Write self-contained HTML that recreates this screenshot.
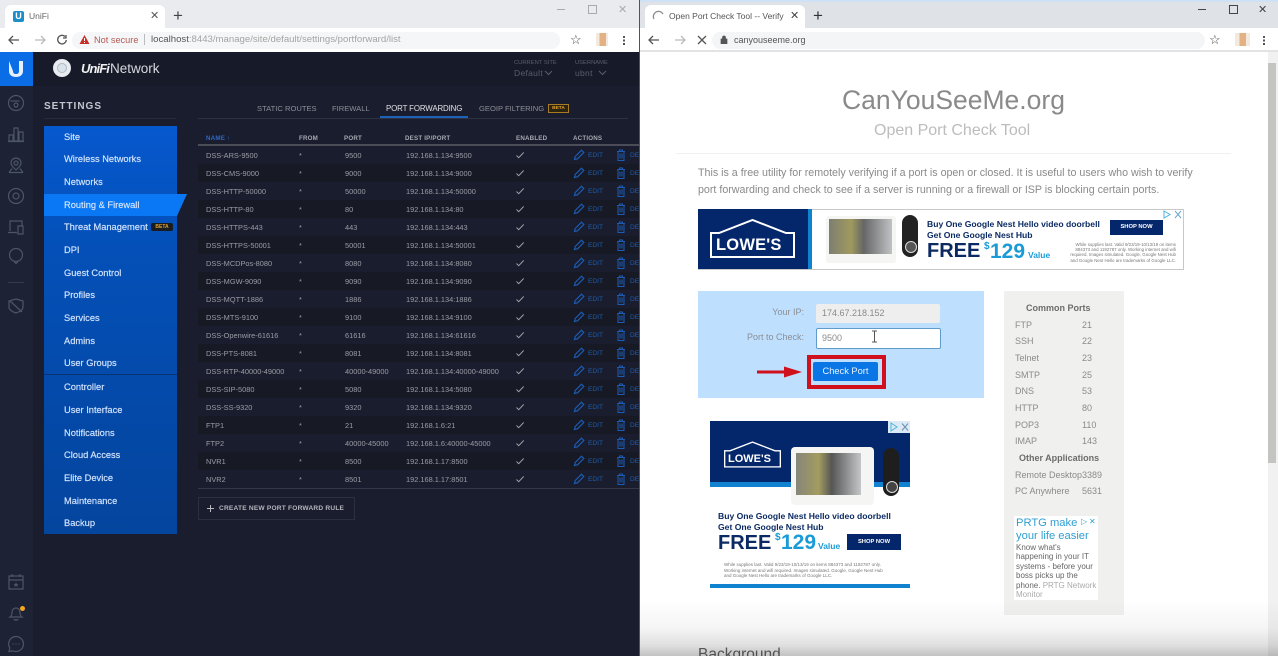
<!DOCTYPE html>
<html><head><meta charset="utf-8"><style>
html,body{margin:0;padding:0;width:1278px;height:656px;overflow:hidden;background:#fff}
body{font-family:"Liberation Sans",sans-serif;position:relative}
#w{position:absolute;left:0;top:0;width:1278px;height:656px;overflow:hidden;filter:blur(.35px)}
#w div,#w span,#w b,#w i,#w svg{position:absolute;white-space:nowrap;display:block}
.m{left:64px;font-size:9.3px;color:#d6e6ff;line-height:12px;margin-top:-.7px;-webkit-text-stroke:.15px #d6e6ff}
.a{left:198px;width:441px;height:18px;background:#171a24}
.t{font-size:7.4px;color:#9a9da6;line-height:10px}
.h{font-size:6.2px;font-weight:bold;color:#a6a9b2;line-height:8px;top:135px;letter-spacing:.2px}
.p{font-size:9px;color:#8b8b8b;line-height:11px}
.nav{left:7px;width:18px;height:18px;fill:none;stroke:#4c5566;stroke-width:1.2}
.e{font-size:6.6px;color:#1d5cb0;line-height:10px}
</style></head><body><div id="w">
<svg style="width:0;height:0"><defs>
<symbol id="pen" viewBox="0 0 12 12"><path d="M1.500 10.500l.7-3L8.500 1.200l2.300 2.300-6.300 6.300z" fill="none" stroke="#1c5cb4" stroke-width="1.200"/></symbol>
<symbol id="tr" viewBox="0 0 10 12"><path d="M1 2.500h8M3.500 2.500V1h3v1.500M2 2.500v9h6v-9M4 4.500v5M6 4.500v5" fill="none" stroke="#1c5cb4" stroke-width="1"/></symbol>
<symbol id="ck" viewBox="0 0 10 10"><path d="M1.500 5.500l2.200 2.200 5-5.200" fill="none" stroke="#a0a2a8" stroke-width="1"/></symbol>
<symbol id="lw" viewBox="0 0 85 39" preserveAspectRatio="none"><path d="M1 38V14H9L42.500 1 76 14H84V38Z" fill="none" stroke="#fff" stroke-width="2"/></symbol>
</defs></svg>

<!-- left browser -->
<div style="left:0;top:0;width:639px;height:28px;background:#e9ebee"></div>
<div style="left:5px;top:5px;width:160px;height:23px;background:#fff;border-radius:6px 6px 0 0"></div>
<div style="left:13px;top:11px;width:11px;height:11px;background:#1c8fc9;border-radius:2px;color:#fff;font-size:9px;line-height:11px;text-align:center;font-weight:bold">U</div>
<div style="left:29px;top:10px;font-size:8.500px;line-height:12px;color:#666">UniFi</div>
<div style="left:150px;top:10px;font-size:11px;line-height:12px;color:#555">✕</div>
<div style="left:173px;top:6px;font-size:17px;line-height:20px;color:#444">+</div>
<div style="left:0;top:28px;width:639px;height:24px;background:#fff"></div>
<div style="left:72px;top:32px;width:488px;height:17px;background:#f5f6f7;border-radius:9px"></div>
<svg style="left:5px;top:33px;width:68px;height:14px" viewBox="0 0 68 14"><path d="M14 7H4M8 3L4 7l4 4" fill="none" stroke="#555" stroke-width="1.300"/><path d="M40 7H30M36 3l4 4-4 4" fill="none" stroke="#bbb" stroke-width="1.300"/><path d="M60 3.500A4.300 4.300 0 1 0 61.300 7M61 2v3h-3" fill="none" stroke="#555" stroke-width="1.300"/></svg>
<svg style="left:79px;top:34px;width:11px;height:11px" viewBox="0 0 11 11"><path d="M5.500 1L10.500 10H.5z" fill="#c9302a"/><path d="M5.500 4v3M5.500 8v1" stroke="#fff"/></svg>
<div style="left:94px;top:34px;font-size:9.200px;line-height:12px;color:#b55a55">Not secure</div>
<div style="left:144px;top:34px;width:1px;height:11px;background:#bbb"></div>
<div style="left:151px;top:34px;font-size:9.600px;line-height:12px;color:#a4a4a4"><span style="position:static;display:inline;color:#555">localhost</span>:8443/manage/site/default/settings/portforward/list</div>
<div style="left:570px;top:32px;font-size:13px;line-height:16px;color:#444">☆</div>
<div style="left:596px;top:33px;width:12px;height:13px;background:linear-gradient(90deg,#f3eadf 30%,#e3b184 30%,#e3b184 85%,#f3eadf 85%)"></div>
<div style="left:623px;top:36px;width:2px;height:2px;background:#555;box-shadow:0 3.500px #555,0 7px #555"></div>
<div style="left:557px;top:9px;width:8px;height:1px;background:#aaa"></div>
<div style="left:588px;top:5px;width:7px;height:7px;border:1px solid #aaa"></div>
<div style="left:618px;top:3px;font-size:11px;line-height:14px;color:#aaa">✕</div>

<!-- unifi app -->
<div style="left:0;top:52px;width:639px;height:604px;background:#1a1d2d"></div>
<div style="left:0;top:52px;width:33px;height:604px;background:#1d2334"></div>
<div style="left:33px;top:52px;width:606px;height:34px;background:#171a29"></div>
<div style="left:0;top:52px;width:33px;height:34px;background:#0a6de6"></div>
<svg style="left:6px;top:58px;width:20px;height:22px" viewBox="0 0 20 22"><path d="M3 3v10c0 4 3 6 7 6s7-2 7-6V3h-4v10c0 2-1 3-3 3s-3-1-3-3" fill="#e6f0ff"/></svg>
<svg class="nav" style="top:94px" viewBox="0 0 18 18"><circle cx="9" cy="9" r="7.500"/><circle cx="9" cy="11" r="2"/><path d="M3.500 7h9"/></svg>
<svg class="nav" style="top:125px" viewBox="0 0 18 18"><path d="M2 16V10h4v6zM7 16V3h4v13zM12 16V7h4v9zM1 16.500h16"/></svg>
<svg class="nav" style="top:156px" viewBox="0 0 18 18"><path d="M9 2a5 5 0 0 1 5 5c0 3-3 5-5 7-2-2-5-4-5-7a5 5 0 0 1 5-5zM2 16.500l3-4M16 16.500l-3-4M2 16.500h14"/><circle cx="9" cy="7" r="2"/></svg>
<svg class="nav" style="top:187px" viewBox="0 0 18 18"><circle cx="9" cy="9" r="7.500"/><circle cx="9" cy="9" r="3"/></svg>
<svg class="nav" style="top:218px" viewBox="0 0 18 18"><path d="M3 13V3h12v5M1 14.500h9M11 8h5v8h-5z"/></svg>
<svg class="nav" style="top:247px" viewBox="0 0 18 18"><circle cx="9" cy="8" r="6.500"/><path d="M7 14.500l2 2 2-2"/></svg>
<div style="left:8px;top:282px;width:16px;height:1px;background:#333a4a"></div>
<svg class="nav" style="top:297px" viewBox="0 0 18 18"><path d="M9 2l7 2v6c0 3-4 5-7 6-3-1-7-3-7-6V4zM3 4l12 11"/></svg>
<svg class="nav" style="top:573px" viewBox="0 0 18 18"><path d="M2 3h14v13H2zM2 7h14M5 1v3M13 1v3"/><path d="M9 9l.8 2h1.800l-1.500 1.200.6 2L9 13l-1.700 1.200.6-2L6.400 11h1.800z" fill="#4c5566" stroke="none"/></svg>
<svg class="nav" style="top:604px" viewBox="0 0 18 18"><path d="M3 13c1.500-1 2-2 2-5a4 4 0 0 1 8 0c0 3 .5 4 2 5zM7 15c.5 1.500 3.500 1.500 4 0"/></svg>
<div style="left:20px;top:606px;width:5px;height:5px;border-radius:50%;background:#f5a623"></div>
<svg class="nav" style="top:635px" viewBox="0 0 18 18"><path d="M9 1.500a7.500 7.500 0 1 1-3 14.400L2 16.500l.8-3.500A7.500 7.500 0 0 1 9 1.500z"/><path d="M5.500 9h1M8.500 9h1M11.500 9h1"/></svg>

<div style="left:53px;top:59px;width:18px;height:18px;border-radius:50%;background:#e8ebef"></div>
<div style="left:57px;top:63px;width:8px;height:8px;border-radius:50%;background:#dbe3ea;border:1px solid #aeb8c4"></div>
<div style="left:81px;top:60px;font-size:13px;line-height:18px;color:#f0f0f0;font-style:italic;font-weight:bold;letter-spacing:-.9px">UniFi</div>
<div style="left:110px;top:60px;font-size:13.500px;line-height:18px;color:#d8dadf">Network</div>
<div style="left:514px;top:59px;font-size:5.800px;line-height:8px;color:#5a5e6c">CURRENT SITE</div>
<div style="left:514px;top:68px;font-size:8.500px;line-height:10px;color:#5a5e6c;letter-spacing:.3px">Default</div>
<svg style="left:544px;top:70px;width:9px;height:6px" viewBox="0 0 9 6"><path d="M1 1l3.500 3.500L8 1" fill="none" stroke="#5a5e6c"/></svg>
<div style="left:575px;top:59px;font-size:5.800px;line-height:8px;color:#5a5e6c">USERNAME</div>
<div style="left:575px;top:68px;font-size:8.500px;line-height:10px;color:#5a5e6c;letter-spacing:.3px">ubnt</div>
<svg style="left:598px;top:70px;width:9px;height:6px" viewBox="0 0 9 6"><path d="M1 1l3.500 3.500L8 1" fill="none" stroke="#5a5e6c"/></svg>

<div style="left:44px;top:101px;font-size:10px;line-height:12px;color:#c3c7cf;font-weight:bold;letter-spacing:1px">SETTINGS</div>
<div style="left:44px;top:118px;width:132px;height:1px;background:#262a3a"></div>
<div style="left:198px;top:118px;width:430px;height:1px;background:#2e3242"></div>
<div style="left:257px;top:103.500px;font-size:7.600px;line-height:10px;color:#8c8f99">STATIC ROUTES</div>
<div style="left:332px;top:103.500px;font-size:7.600px;line-height:10px;color:#8c8f99">FIREWALL</div>
<div style="left:386px;top:103.500px;font-size:7.900px;line-height:10px;color:#dfe1e6;letter-spacing:-.13px">PORT FORWARDING</div>
<div style="left:380px;top:116px;width:88px;height:2px;background:#1c62b8"></div>
<div style="left:479px;top:103.500px;font-size:7.600px;line-height:10px;color:#8c8f99">GEOIP FILTERING</div>
<div style="left:548px;top:104px;width:19px;height:7px;background:#2b2412;border:.5px solid #a87c22;color:#e0a02c;font-size:4.800px;line-height:7px;text-align:center;font-weight:bold">BETA</div>

<!-- menu -->
<div style="left:44px;top:126px;width:133px;height:408px;background:linear-gradient(180deg,#0658ce 0,#0450b8 30%,#0449a8 70%,#04459e 100%)"></div>
<div style="left:44px;top:374px;width:133px;height:1px;background:#063372"></div>
<div style="left:44px;top:194px;width:133px;height:22px;background:#0a78f5"></div>
<svg style="left:177px;top:194px;width:10px;height:22px" viewBox="0 0 10 22"><path d="M0 0h10L0 22z" fill="#0a78f5"/></svg>
<div class="m" style="top:132px">Site</div>
<div class="m" style="top:154px">Wireless Networks</div>
<div class="m" style="top:177px">Networks</div>
<div class="m" style="top:200px">Routing &amp; Firewall</div>
<div class="m" style="top:222px">Threat Management</div>
<div style="left:151px;top:223px;width:22px;height:8px;background:#1a1c20;border-radius:2px;color:#e0a02c;font-size:5px;line-height:8px;text-align:center;font-weight:bold">BETA</div>
<div class="m" style="top:245px">DPI</div>
<div class="m" style="top:268px">Guest Control</div>
<div class="m" style="top:290px">Profiles</div>
<div class="m" style="top:313px">Services</div>
<div class="m" style="top:336px">Admins</div>
<div class="m" style="top:358px">User Groups</div>
<div class="m" style="top:382px">Controller</div>
<div class="m" style="top:405px">User Interface</div>
<div class="m" style="top:428px">Notifications</div>
<div class="m" style="top:450px">Cloud Access</div>
<div class="m" style="top:473px">Elite Device</div>
<div class="m" style="top:496px">Maintenance</div>
<div class="m" style="top:518px">Backup</div>

<!-- table -->
<div class="h" style="left:206px;color:#2d68c4">NAME ↑</div>
<div class="h" style="left:299px">FROM</div>
<div class="h" style="left:344px">PORT</div>
<div class="h" style="left:405px">DEST IP/PORT</div>
<div class="h" style="left:516px">ENABLED</div>
<div class="h" style="left:573px">ACTIONS</div>
<div style="left:198px;top:144px;width:441px;height:2px;background:#4a4d58"></div>
<div class="a" style="top:164px"></div><div class="a" style="top:200px"></div><div class="a" style="top:236px"></div><div class="a" style="top:272px"></div><div class="a" style="top:308px"></div><div class="a" style="top:344px"></div><div class="a" style="top:380px"></div><div class="a" style="top:416px"></div><div class="a" style="top:452px"></div>

<div class="t" style="left:206px;top:147px;white-space:pre;line-height:18px">DSS-ARS-9500
DSS-CMS-9000
DSS-HTTP-50000
DSS-HTTP-80
DSS-HTTPS-443
DSS-HTTPS-50001
DSS-MCDPos-8080
DSS-MGW-9090
DSS-MQTT-1886
DSS-MTS-9100
DSS-Openwire-61616
DSS-PTS-8081
DSS-RTP-40000-49000
DSS-SIP-5080
DSS-SS-9320
FTP1
FTP2
NVR1
NVR2</div>
<div class="t" style="left:299px;top:147px;white-space:pre;line-height:18px">*
*
*
*
*
*
*
*
*
*
*
*
*
*
*
*
*
*
*</div>
<div class="t" style="left:345px;top:147px;white-space:pre;line-height:18px">9500
9000
50000
80
443
50001
8080
9090
1886
9100
61616
8081
40000-49000
5080
9320
21
40000-45000
8500
8501</div>
<div class="t" style="left:406px;top:147px;white-space:pre;line-height:18px">192.168.1.134:9500
192.168.1.134:9000
192.168.1.134:50000
192.168.1.134:80
192.168.1.134:443
192.168.1.134:50001
192.168.1.134:8080
192.168.1.134:9090
192.168.1.134:1886
192.168.1.134:9100
192.168.1.134:61616
192.168.1.134:8081
192.168.1.134:40000-49000
192.168.1.134:5080
192.168.1.134:9320
192.168.1.6:21
192.168.1.6:40000-45000
192.168.1.17:8500
192.168.1.17:8501</div>
<div class="e" style="left:588px;top:147px;white-space:pre;line-height:18px">EDIT
EDIT
EDIT
EDIT
EDIT
EDIT
EDIT
EDIT
EDIT
EDIT
EDIT
EDIT
EDIT
EDIT
EDIT
EDIT
EDIT
EDIT
EDIT</div>
<div class="e" style="left:630px;top:147px;width:9px;overflow:hidden;white-space:pre;line-height:18px">DELETE
DELETE
DELETE
DELETE
DELETE
DELETE
DELETE
DELETE
DELETE
DELETE
DELETE
DELETE
DELETE
DELETE
DELETE
DELETE
DELETE
DELETE
DELETE</div>
<svg style="left:515px;top:146px;width:125px;height:342px" viewBox="0 0 125 342">
<g id="ic"><use href="#ck" x="0" y="4" width="10" height="10"/><use href="#pen" x="58" y="3" width="12" height="12"/><use href="#tr" x="101" y="3" width="10" height="12"/></g>
<use href="#ic" y="18"/><use href="#ic" y="36"/><use href="#ic" y="54"/><use href="#ic" y="72"/><use href="#ic" y="90"/><use href="#ic" y="108"/><use href="#ic" y="126"/><use href="#ic" y="144"/><use href="#ic" y="162"/><use href="#ic" y="180"/><use href="#ic" y="198"/><use href="#ic" y="216"/><use href="#ic" y="234"/><use href="#ic" y="252"/><use href="#ic" y="270"/><use href="#ic" y="288"/><use href="#ic" y="306"/><use href="#ic" y="324"/>
</svg>
<div style="left:198px;top:488px;width:441px;height:1px;background:#33374a"></div>
<div style="left:198px;top:497px;width:155px;height:21px;border:1px solid #2b2f41"></div>
<svg style="left:206px;top:504px;width:9px;height:9px" viewBox="0 0 9 9"><path d="M4.500 1v7M1 4.500h7" stroke="#b8bac2"/></svg>
<div style="left:219px;top:504.500px;font-size:6.600px;line-height:8px;font-weight:bold;color:#b4b6be;letter-spacing:.2px">CREATE NEW PORT FORWARD RULE</div>

<div style="left:639px;top:0;width:1px;height:656px;background:#1b5fa8"></div>

<!-- right browser -->
<div style="left:640px;top:0;width:638px;height:28px;background:#dfe2e7"></div>
<div style="left:640px;top:0;width:638px;height:2px;background:#cfe2f5"></div>
<div style="left:645px;top:5px;width:160px;height:23px;background:#fff;border-radius:6px 6px 0 0"></div>
<svg style="left:652px;top:10px;width:13px;height:13px" viewBox="0 0 13 13"><path d="M2 9A5 5 0 0 1 11 4" fill="none" stroke="#888" stroke-width="1.200"/></svg>
<div style="left:669px;top:10px;width:115px;overflow:hidden;font-size:8.500px;line-height:12px;color:#555">Open Port Check Tool -- Verify Port</div>
<div style="left:790px;top:10px;font-size:11px;line-height:12px;color:#444">✕</div>
<div style="left:813px;top:6px;font-size:17px;line-height:20px;color:#333">+</div>
<div style="left:640px;top:28px;width:638px;height:23px;background:#fff"></div>
<div style="left:640px;top:50px;width:638px;height:2px;background:#e2e3e5"></div>
<div style="left:712px;top:32px;width:493px;height:17px;background:#f3f5f6;border-radius:9px"></div>
<svg style="left:645px;top:33px;width:68px;height:14px" viewBox="0 0 68 14"><path d="M14 7H4M8 3L4 7l4 4" fill="none" stroke="#555" stroke-width="1.300"/><path d="M40 7H30M36 3l4 4-4 4" fill="none" stroke="#bbb" stroke-width="1.300"/><path d="M53 3l8 8M61 3l-8 8" fill="none" stroke="#555" stroke-width="1.300"/></svg>
<svg style="left:720px;top:35px;width:8px;height:9px" viewBox="0 0 8 9"><path d="M1 4h6v5H1zM2.500 4V2.500a1.500 1.500 0 0 1 3 0V4" fill="#555" stroke="#555" stroke-width=".7"/></svg>
<div style="left:734px;top:34px;font-size:9px;line-height:12px;color:#555">canyouseeme.org</div>
<div style="left:1209px;top:32px;font-size:13px;line-height:16px;color:#444">☆</div>
<div style="left:1235px;top:33px;width:15px;height:13px;background:linear-gradient(90deg,#f3eadf 30%,#e3b184 30%,#e3b184 75%,#f3eadf 75%)"></div>
<div style="left:1263px;top:36px;width:2px;height:2px;background:#555;box-shadow:0 3.500px #555,0 7px #555"></div>
<div style="left:1198px;top:9px;width:8px;height:1px;background:#444"></div>
<div style="left:1229px;top:5px;width:7px;height:7px;border:1px solid #444"></div>
<div style="left:1258px;top:3px;font-size:11px;line-height:14px;color:#444">✕</div>

<!-- page -->
<div style="left:1268px;top:52px;width:10px;height:604px;background:#f1f1f1"></div>
<div style="left:1268px;top:63px;width:8px;height:400px;background:#c4c5c2"></div>
<div style="left:842px;top:84px;font-size:26.500px;line-height:32px;color:#8a8a8a;font-weight:normal">CanYouSeeMe.org</div>
<div style="left:874px;top:121px;font-size:16px;line-height:20px;color:#bcbcbc">Open Port Check Tool</div>
<div style="left:676px;top:153px;width:555px;height:1px;background:#f0f0f0"></div>
<div style="left:698px;top:165px;font-size:10.680px;line-height:17px;color:#8a8a8a">This is a free utility for remotely verifying if a port is open or closed. It is useful to users who wish to verify<br>port forwarding and check to see if a server is running or a firewall or ISP is blocking certain ports.</div>

<!-- top ad -->
<div style="left:698px;top:209px;width:484px;height:59px;background:#fff;border:.5px solid #c8c8c8"></div>
<div style="left:698px;top:209px;width:110px;height:60px;background:#04266b"></div>
<div style="left:808px;top:209px;width:4px;height:60px;background:#1182d0"></div>
<svg style="left:710px;top:219px;width:85px;height:39px" viewBox="0 0 85 39"><use href="#lw" width="85" height="39"/></svg>
<div style="left:716px;top:236px;font-size:16.500px;line-height:19px;color:#fff;font-weight:bold;letter-spacing:.2px">LOWE'S</div>
<div style="left:826px;top:216px;width:70px;height:47px;background:#f5f5f3;border-radius:3px"></div>
<div style="left:829px;top:219px;width:63px;height:35px;background:linear-gradient(90deg,#7e7e72,#a09a5e 35%,#666 55%,#bfc2c4)"></div>
<div style="left:902px;top:215px;width:16px;height:42px;background:#222;border-radius:8px"></div>
<div style="left:905px;top:241px;width:10px;height:10px;border-radius:50%;background:#555;border:1px solid #ddd"></div>
<div style="left:927px;top:219px;font-size:8.600px;line-height:11px;font-weight:bold;color:#0b2a63">Buy One Google Nest Hello video doorbell</div>
<div style="left:927px;top:230px;font-size:8.600px;line-height:11px;font-weight:bold;color:#0b2a63">Get One Google Nest Hub</div>
<div style="left:927px;top:240px;font-size:20px;line-height:23px;font-weight:bold;color:#0b2a63">FREE</div>
<div style="left:984px;top:241px;font-size:10px;line-height:12px;font-weight:bold;color:#1a9bd8">$</div>
<div style="left:990px;top:240px;font-size:21px;line-height:23px;font-weight:bold;color:#1a9bd8">129</div>
<div style="left:1028px;top:250px;font-size:8.500px;line-height:11px;font-weight:bold;color:#1a9bd8">Value</div>
<div style="left:1110px;top:220px;width:53px;height:15px;background:#04266b;color:#fff;font-size:5.800px;line-height:15px;text-align:center;font-weight:bold">SHOP NOW</div>
<div style="left:1066px;top:242px;width:110px;font-size:4.400px;line-height:5.200px;color:#777;text-align:right;white-space:pre">While supplies last. Valid 9/23/19-10/13/19 on items
884373 and 1192787 only. Working internet and wifi
required. Images simulated. Google, Google Nest Hub
and Google Nest Hello are trademarks of Google LLC.</div>
<svg style="left:1163px;top:210px;width:19px;height:9px" viewBox="0 0 19 9"><path d="M1 1l6 3.500-6 3.500z" fill="none" stroke="#4cb4e0"/><path d="M12 1l6 7M18 1l-6 7" stroke="#6aa8d0"/></svg>

<!-- form -->
<div style="left:698px;top:291px;width:286px;height:107px;background:#bfdffe"></div>
<div style="left:760px;top:307px;width:44px;text-align:right;font-size:9px;line-height:11px;color:#8a8f96">Your IP:</div>
<div style="left:735px;top:332px;width:69px;text-align:right;font-size:9px;line-height:11px;color:#8a8f96">Port to Check:</div>
<div style="left:816px;top:304px;width:124px;height:19px;background:#eeeeee;border-radius:2px"></div>
<div style="left:822px;top:307px;font-size:9px;line-height:12px;color:#8a8a8a">174.67.218.152</div>
<div style="left:816px;top:328px;width:123px;height:19px;background:#fff;border:1px solid #5f9ccc;border-radius:2px"></div>
<div style="left:822px;top:332px;font-size:9px;line-height:12px;color:#8a8a8a">9500</div>
<svg style="left:871px;top:330px;width:7px;height:13px" viewBox="0 0 7 13"><path d="M1 1h5M1 12h5M3.500 1v11" stroke="#555" fill="none"/></svg>
<div style="left:807px;top:355px;width:71px;height:26px;border:4px solid #d0101c"></div>
<div style="left:813px;top:362px;width:65px;height:19px;background:#0a76e6;border-radius:2px;color:#e8f2ff;font-size:9.300px;line-height:19px;text-align:center">Check Port</div>
<svg style="left:756px;top:364px;width:49px;height:16px" viewBox="0 0 49 16"><path d="M1 6.500h27V2.500l18 5.500-18 5.500V9.500H1z" fill="#d0101c"/></svg>

<!-- bottom ad -->
<div style="left:710px;top:421px;width:200px;height:167px;background:#fff"></div>
<div style="left:710px;top:421px;width:200px;height:61px;background:#04266b"></div>
<div style="left:710px;top:482px;width:200px;height:5px;background:#1182d0"></div>
<div style="left:710px;top:584px;width:200px;height:4px;background:#1182d0"></div>
<svg style="left:724px;top:441px;width:57px;height:27px" viewBox="0 0 85 39"><use href="#lw" width="85" height="39"/></svg>
<div style="left:728px;top:452px;font-size:11px;line-height:14px;color:#fff;font-weight:bold">LOWE'S</div>
<div style="left:791px;top:447px;width:83px;height:58px;background:#f5f5f3;border-radius:4px"></div>
<div style="left:796px;top:453px;width:65px;height:42px;background:linear-gradient(90deg,#86867a,#a39c60 35%,#555 55%,#c4c7c9)"></div>
<div style="left:883px;top:448px;width:16px;height:48px;background:#1e1e1e;border-radius:8px"></div>
<div style="left:886px;top:481px;width:10px;height:10px;border-radius:50%;background:#444;border:1px solid #ddd"></div>
<div style="left:718px;top:510px;font-size:8.600px;line-height:12px;font-weight:bold;color:#0b2a63">Buy One Google Nest Hello video doorbell</div>
<div style="left:718px;top:521px;font-size:8.600px;line-height:12px;font-weight:bold;color:#0b2a63">Get One Google Nest Hub</div>
<div style="left:718px;top:531px;font-size:20px;line-height:24px;font-weight:bold;color:#0b2a63">FREE</div>
<div style="left:775px;top:532px;font-size:10px;line-height:12px;font-weight:bold;color:#1a9bd8">$</div>
<div style="left:781px;top:531px;font-size:21px;line-height:24px;font-weight:bold;color:#1a9bd8">129</div>
<div style="left:818px;top:541px;font-size:8.500px;line-height:11px;font-weight:bold;color:#1a9bd8">Value</div>
<div style="left:847px;top:534px;width:54px;height:16px;background:#04266b;color:#fff;font-size:5.800px;line-height:16px;text-align:center;font-weight:bold">SHOP NOW</div>
<div style="left:724px;top:562px;font-size:4.500px;line-height:5.500px;color:#777;white-space:pre">While supplies last. Valid 9/23/19-10/13/19 on items 884373 and 1192787 only.
Working internet and wifi required. Images simulated. Google, Google Nest Hub
and Google Nest Hello are trademarks of Google LLC.</div>
<svg style="left:888px;top:421px;width:22px;height:12px" viewBox="0 0 22 12"><path d="M0 0h22v12H0z" fill="#dceaf5"/><path d="M3 2l6 4-6 4z" fill="none" stroke="#4cb4e0"/><path d="M14 2.500l6 7M20 2.500l-6 7" stroke="#6a8fb0"/></svg>
<div style="left:698px;top:646px;font-size:15.500px;line-height:18px;color:#666">Background</div>

<!-- ports -->
<div style="left:1004px;top:291px;width:120px;height:324px;background:#f0f0ee"></div>
<div class="p" style="left:1026px;top:303px;font-weight:bold;color:#6c6c6c">Common Ports</div>
<div class="p" style="left:1015px;top:320px">FTP</div><div class="p" style="left:1082px;top:320px">21</div>
<div class="p" style="left:1015px;top:336px">SSH</div><div class="p" style="left:1082px;top:336px">22</div>
<div class="p" style="left:1015px;top:353px">Telnet</div><div class="p" style="left:1082px;top:353px">23</div>
<div class="p" style="left:1015px;top:370px">SMTP</div><div class="p" style="left:1082px;top:370px">25</div>
<div class="p" style="left:1015px;top:386px">DNS</div><div class="p" style="left:1082px;top:386px">53</div>
<div class="p" style="left:1015px;top:403px">HTTP</div><div class="p" style="left:1082px;top:403px">80</div>
<div class="p" style="left:1015px;top:420px">POP3</div><div class="p" style="left:1082px;top:420px">110</div>
<div class="p" style="left:1015px;top:436px">IMAP</div><div class="p" style="left:1082px;top:436px">143</div>
<div class="p" style="left:1019px;top:453px;font-weight:bold;color:#6c6c6c">Other Applications</div>
<div class="p" style="left:1015px;top:470px">Remote Desktop</div><div class="p" style="left:1082px;top:470px">3389</div>
<div class="p" style="left:1015px;top:486px">PC Anywhere</div><div class="p" style="left:1082px;top:486px">5631</div>
<div style="left:1014px;top:516px;width:84px;height:84px;background:#fff"></div>
<div style="left:1016px;top:516px;width:62px;overflow:hidden;font-size:11.200px;line-height:14px;color:#2f9fd2">PRTG make</div>
<div style="left:1016px;top:530px;font-size:11.200px;line-height:13px;color:#2f9fd2">your life easier</div>
<div style="left:1081px;top:517px;font-size:8px;line-height:10px;color:#2f9fd2">▷</div>
<div style="left:1089px;top:517px;font-size:8px;line-height:10px;color:#2f9fd2">✕</div>
<div style="left:1016px;top:543px;font-size:8px;line-height:9.400px;color:#666;white-space:pre">Know what's
happening in your IT
systems - before your
boss picks up the
phone. <span style="position:static;display:inline;color:#aaa">PRTG Network</span>
<span style="position:static;display:inline;color:#aaa">Monitor</span></div>

<div style="left:640px;top:600px;width:638px;height:56px;background:linear-gradient(180deg,rgba(0,0,0,0) 0,rgba(0,0,0,.04) 50%,rgba(0,0,0,.12) 80%,rgba(0,0,0,.24) 100%)"></div>
</div></body></html>
